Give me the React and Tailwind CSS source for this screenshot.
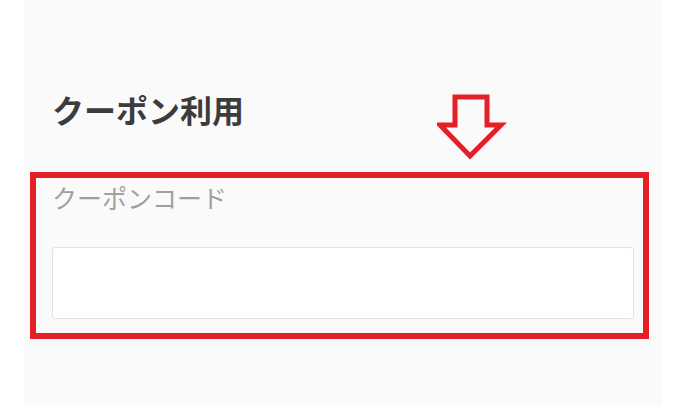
export default function App() {
  return (
    <div className="w-[676px] h-[405px] bg-white px-[14px] pl-[24px] overflow-hidden" style={{ fontFamily: '"Noto Sans CJK JP", "Noto Sans", sans-serif' }}>
      <div className="relative h-full bg-[#fafafa] px-[28px] pt-[93px]">
        <h2 className="text-[32px] leading-none font-bold text-[#3c3c3c]">クーポン利用</h2>

        <label className="block mt-[60px] text-[25px] leading-none text-[#a0a0a0]">クーポンコード</label>
        <input
          type="text"
          className="block mt-[37px] w-full h-[72px] bg-white border border-[#e2e2e2] rounded-[3px] outline-none"
        />

        {/* annotation: red frame */}
        <div className="absolute left-[6px] top-[172px] w-[619px] h-[167px] border-[6px] border-[#e31f27] pointer-events-none" />

        {/* annotation: down arrow */}
        <svg className="absolute left-[413px] top-[94px]" width="70" height="66" viewBox="0 0 70 66">
          <path
            d="M18 3 H50 V31 H64 L33 62 L3 31 H18 Z"
            fill="none"
            stroke="#e31f27"
            strokeWidth="5"
            strokeLinejoin="miter"
          />
        </svg>
      </div>
    </div>
  );
}
